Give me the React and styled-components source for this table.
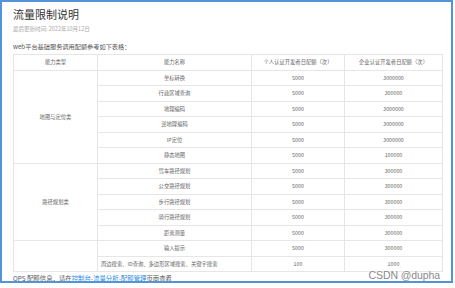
import React from "react";
import styled, { createGlobalStyle } from "styled-components";

const GlobalStyle = createGlobalStyle`
  html, body {
    margin: 0;
    padding: 0;
    background: #fff;
  }
  body {
    font-family: "Noto Sans CJK SC", "Noto Sans", sans-serif;
  }
`;

const Frame = styled.div`
  position: relative;
  box-sizing: border-box;
  width: 453px;
  height: 283px;
  border: 2px solid #5393d8;
  padding: 6px 0 0 11px;
  overflow: hidden;
`;

const Title = styled.h1`
  margin: 0;
  font-size: 11px;
  line-height: 12px;
  font-weight: 400;
  color: #333;
`;

const Meta = styled.div`
  margin-top: 6px;
  font-size: 5.5px;
  line-height: 7px;
  color: #a8a8a8;
`;

const Intro = styled.p`
  margin: 10px 0 3px;
  font-size: 6.2px;
  line-height: 8px;
  color: #555;
`;

const Table = styled.table`
  border-collapse: collapse;
  table-layout: fixed;
  width: 429px;
  font-size: 5.3px;
  color: #666;

  td, th {
    border: 1px solid #e6e6e6;
    padding: 0;
    text-align: center;
    font-weight: 400;
    line-height: 7px;
  }
  thead tr {
    height: 16px;
  }
  tbody tr:nth-child(odd) {
    height: 15px;
  }
  tbody tr:nth-child(even) {
    height: 16px;
  }
`;

const Cell = styled.td`
  text-align: ${(p) => (p.$left ? "left" : "center")} !important;
  padding-left: ${(p) => (p.$left ? "3px" : "0")} !important;
`;

const Footer = styled.p`
  margin: 3px 0 0;
  font-size: 6.4px;
  line-height: 8px;
  color: #555;

  a {
    color: #1e88e5;
    text-decoration: none;
  }
`;

const Watermark = styled.div`
  position: absolute;
  right: 11px;
  top: 267px;
  font-family: "Liberation Sans", Arial, sans-serif;
  font-size: 10.5px;
  color: #8a8a8a;
  text-shadow: 0 0 2px #fff, 0 0 2px #fff;
  letter-spacing: -0.1px;
`;

const groups = [
  {
    type: "地图与定位类",
    rows: [
      ["坐标转换", "5000", "3000000"],
      ["行政区域查询", "5000", "300000"],
      ["地理编码", "5000", "3000000"],
      ["逆地理编码", "5000", "3000000"],
      ["IP定位", "5000", "3000000"],
      ["静态地图", "5000", "100000"],
    ],
  },
  {
    type: "路径规划类",
    rows: [
      ["驾车路径规划", "5000", "300000"],
      ["公交路径规划", "5000", "300000"],
      ["步行路径规划", "5000", "300000"],
      ["骑行路径规划", "5000", "300000"],
      ["距离测量", "5000", "300000"],
    ],
  },
  {
    type: "",
    rows: [
      ["输入提示", "5000", "300000"],
      ["周边搜索、ID查询、多边形区域搜索、关键字搜索", "100", "1000", true],
    ],
  },
];

export default function App() {
  return (
    <>
      <GlobalStyle />
      <Frame>
        <Title>流量限制说明</Title>
        <Meta>最后更新时间: 2022年10月12日</Meta>
        <Intro>web平台基础服务调用配额参考如下表格：</Intro>
        <Table>
          <colgroup>
            <col style={{ width: 84 }} />
            <col style={{ width: 154 }} />
            <col style={{ width: 93 }} />
            <col style={{ width: 98 }} />
          </colgroup>
          <thead>
            <tr>
              <th>能力类型</th>
              <th>能力名称</th>
              <th>个人认证开发者日配额（次）</th>
              <th>企业认证开发者日配额（次）</th>
            </tr>
          </thead>
          <tbody>
            {groups.map((g) =>
              g.rows.map((r, i) => (
                <tr key={g.type + r[0]}>
                  {i === 0 && <td rowSpan={g.rows.length}>{g.type}</td>}
                  <Cell $left={r[3]}>{r[0]}</Cell>
                  <td>{r[1]}</td>
                  <td>{r[2]}</td>
                </tr>
              ))
            )}
          </tbody>
        </Table>
        <Footer>
          QPS 配额信息，请在<a href="#">控制台-流量分析-配额管理</a>页面查看
        </Footer>
        <Watermark>CSDN @dupha</Watermark>
      </Frame>
    </>
  );
}
